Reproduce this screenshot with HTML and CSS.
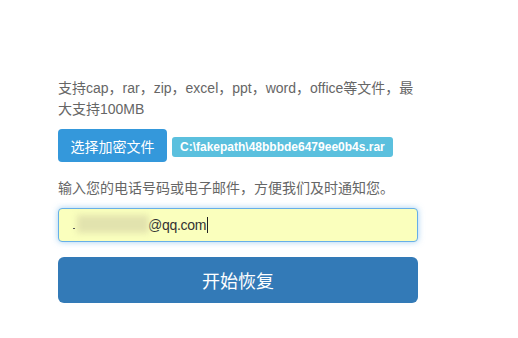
FILE: index.html
```html
<!DOCTYPE html>
<html lang="zh">
<head>
<meta charset="utf-8">
<link rel="stylesheet" href="styles.css">
</head>
<body>
<div class="form">
  <p class="desc">支持cap，rar，zip，excel，ppt，word，office等文件，最大支持100MB</p>
  <div class="file-row">
    <span class="btn-file">选择加密文件</span>
    <span class="label-file">C:\fakepath\48bbbde6479ee0b4s.rar</span>
  </div>
  <p class="hint">输入您的电话号码或电子邮件，方便我们及时通知您。</p>
  <div class="input">
    <span class="blur-wrap"><span class="blur"></span><span class="mark"></span></span><span class="val">@qq.com</span><span class="caret"></span>
  </div>
  <div class="btn-start">开始恢复</div>
</div>
</body>
</html>
```
FILE: styles.css
```css
html, body {
  margin: 0;
  background: #fff;
}
body {
  font-family: "Liberation Sans", "Noto Sans CJK SC", sans-serif;
  color: #666;
}
.form {
  width: 360px;
  padding: 78px 0 0 58px;
}
.desc {
  margin: 0;
  font-size: 14px;
  line-height: 21px;
}
.file-row {
  display: flex;
  align-items: center;
  margin-top: 9px;
}
.btn-file {
  display: flex;
  align-items: center;
  justify-content: center;
  width: 109px;
  height: 33px;
  background: #3498db;
  color: #fff;
  font-size: 14px;
  border-radius: 4px;
}
.label-file {
  margin-left: 5px;
  margin-top: 3px;
  height: 20px;
  line-height: 20px;
  padding: 0 8px;
  background: #5bc0de;
  color: #fff;
  font-size: 12px;
  font-weight: bold;
  border-radius: 3px;
}
.hint {
  margin: 16px 0 0;
  font-size: 14px;
  line-height: 21px;
}
.input {
  position: relative;
  display: flex;
  align-items: center;
  box-sizing: border-box;
  margin-top: 9px;
  height: 34px;
  padding-left: 12px;
  background: #faffbd;
  border: 1px solid #66afe9;
  border-radius: 4px;
  box-shadow: 0 0 6px rgba(102, 175, 233, 0.6);
  font-size: 14px;
  color: #333;
}
.blur-wrap {
  position: relative;
  display: inline-block;
  width: 77px;
  height: 18px;
}
.blur {
  position: absolute;
  left: 6px;
  top: -1px;
  width: 72px;
  height: 18px;
  background: #e2e3ae;
  filter: blur(3px);
}
.mark {
  position: absolute;
  left: 2px;
  top: 12px;
  width: 2px;
  height: 1px;
  background: #555;
}
.val {
  line-height: 18px;
  letter-spacing: -0.3px;
}
.caret {
  display: inline-block;
  width: 1px;
  height: 16px;
  margin-left: 1px;
  background: #222;
}
.btn-start {
  display: flex;
  align-items: center;
  justify-content: center;
  margin-top: 15px;
  height: 46px;
  background: #337ab7;
  color: #fff;
  font-size: 18px;
  border-radius: 6px;
}
```
